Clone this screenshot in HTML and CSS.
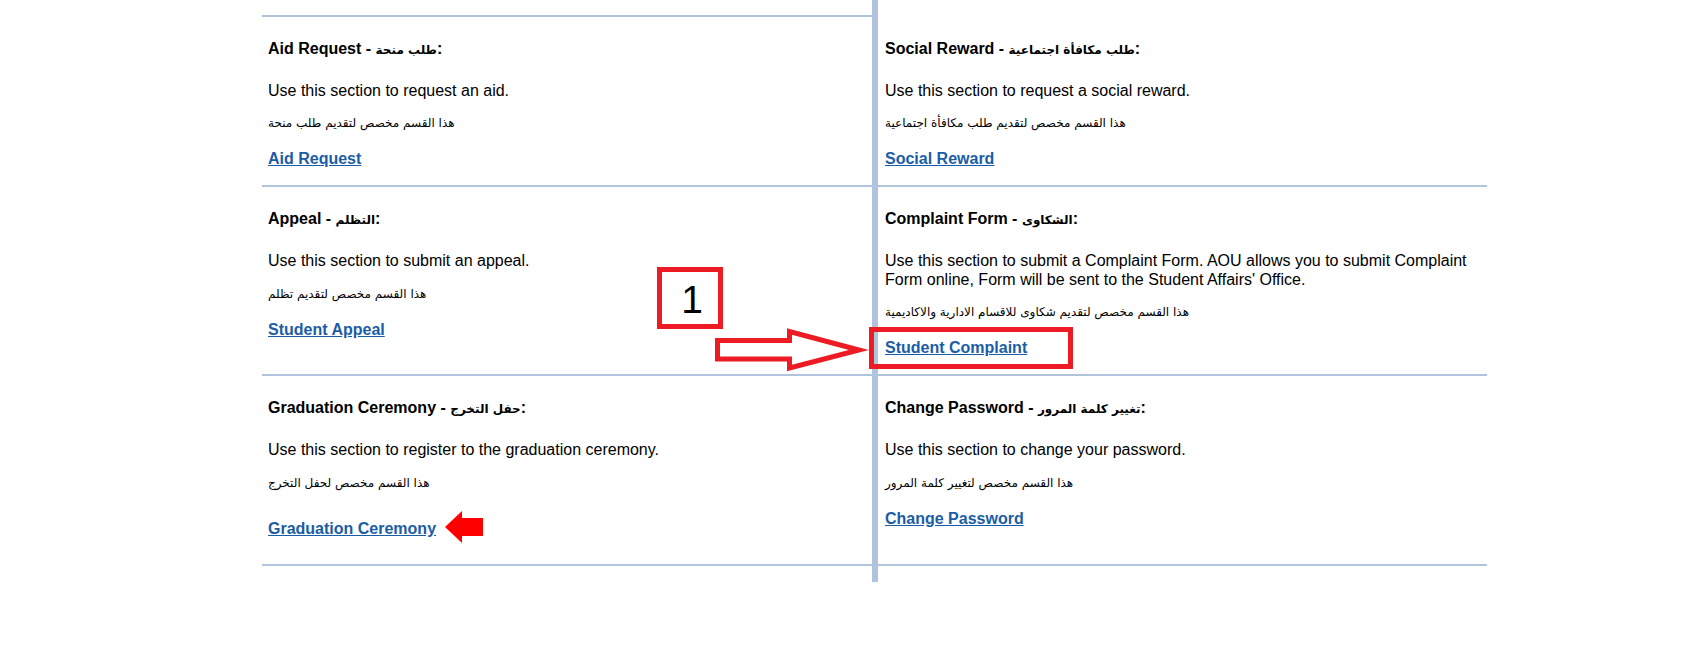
FILE: index.html
```html
<!DOCTYPE html>
<html lang="en">
<head>
<meta charset="utf-8">
<title>Student Services</title>
<link rel="stylesheet" href="styles.css">
</head>
<body>
<div class="page">
  <div class="grid">
    <div class="bar"></div>

    <div class="cell left r1 first">
      <p class="title">Aid Request - <span class="ar">طلب منحة</span>:</p>
      <p class="desc">Use this section to request an aid.</p>
      <p class="ardesc" dir="rtl">هذا القسم مخصص لتقديم طلب منحة</p>
      <p class="linkline"><a href="#">Aid Request</a></p>
    </div>
    <div class="cell right r1 first">
      <p class="title">Social Reward - <span class="ar">طلب مكافأة اجتماعية</span>:</p>
      <p class="desc">Use this section to request a social reward.</p>
      <p class="ardesc" dir="rtl">هذا القسم مخصص لتقديم طلب مكافأة اجتماعية</p>
      <p class="linkline"><a href="#">Social Reward</a></p>
    </div>

    <div class="cell left r2">
      <p class="title">Appeal - <span class="ar">التظلم</span>:</p>
      <p class="desc">Use this section to submit an appeal.</p>
      <p class="ardesc" dir="rtl">هذا القسم مخصص لتقديم تظلم</p>
      <p class="linkline"><a href="#">Student Appeal</a></p>
    </div>
    <div class="cell right r2">
      <p class="title">Complaint Form - <span class="ar">الشكاوى</span>:</p>
      <p class="desc">Use this section to submit a Complaint Form. AOU allows you to submit Complaint Form online, Form will be sent to the Student Affairs' Office.</p>
      <p class="ardesc" dir="rtl">هذا القسم مخصص لتقديم شكاوى للاقسام الادارية والاكاديمية</p>
      <p class="linkline"><a href="#">Student Complaint</a></p>
    </div>

    <div class="cell left r3 tall">
      <p class="title">Graduation Ceremony - <span class="ar">حفل التخرج</span>:</p>
      <p class="desc">Use this section to register to the graduation ceremony.</p>
      <p class="ardesc" dir="rtl">هذا القسم مخصص لحفل التخرج</p>
      <p class="linkline arrowline"><a href="#">Graduation Ceremony</a><svg class="red-arrow" width="38" height="32" viewBox="0 0 38 32"><polygon points="0,16 17,0 17,7 38,7 38,25 17,25 17,32" fill="#ff0000"/></svg></p>
    </div>
    <div class="cell right r3">
      <p class="title">Change Password - <span class="ar">تغيير كلمة المرور</span>:</p>
      <p class="desc">Use this section to change your password.</p>
      <p class="ardesc" dir="rtl">هذا القسم مخصص لتغيير كلمة المرور</p>
      <p class="linkline"><a href="#">Change Password</a></p>
    </div>
  </div>

  <div class="step-box">1</div>
  <svg class="hollow-arrow" width="160" height="56" viewBox="0 0 160 56"><polygon points="7.5,18.5 79.5,18.5 79.5,9.5 149,28 79.5,46 79.5,37 7.5,37" fill="none" stroke="#ed1c24" stroke-width="5" stroke-linejoin="miter"/></svg>
  <div class="highlight"></div>
</div>
</body>
</html>
```

FILE: styles.css
```css
html, body {
  margin: 0;
  padding: 0;
  background: #ffffff;
}

body {
  font-family: "Liberation Sans", Arial, "DejaVu Sans", sans-serif;
  color: #000000;
}

.page {
  position: relative;
  width: 1696px;
  height: 648px;
  overflow: hidden;
}

.grid {
  display: grid;
  grid-template-columns: 610px 6px 609px;
  grid-template-rows: 15px auto auto auto 16px;
  margin-left: 262px;
  width: 1225px;
}

.bar {
  grid-column: 2;
  grid-row: 1 / 6;
  background: #b0c4de;
}

.cell {
  border-bottom: 2px solid #b0c4de;
  padding: 0 6px 17px 6px;
}

.cell.left {
  grid-column: 1;
}

.cell.right {
  grid-column: 3;
  padding-left: 7px;
  padding-right: 8px;
}

.cell.r1 { grid-row: 2; }
.cell.r2 { grid-row: 3; }
.cell.r3 { grid-row: 4; }

.cell.tall {
  padding-bottom: 21px;
}

.cell.left.first {
  border-top: 2px solid #b0c4de;
}

.cell.right.first {
  padding-top: 2px;
}

.cell p {
  margin: 0;
}

.title {
  margin-top: 23px !important;
  font-size: 16px;
  font-weight: bold;
  line-height: 18px;
}

.ar {
  font-family: "DejaVu Sans", sans-serif;
  font-size: 12px;
}

.desc {
  margin-top: 23px !important;
  font-size: 16px;
  line-height: 18.4px;
}

.ardesc {
  margin-top: 14px !important;
  font-family: "DejaVu Sans", sans-serif;
  font-size: 12px;
  line-height: 18px;
  direction: rtl;
  display: inline-block;
}

.linkline {
  margin-top: 18px !important;
  font-size: 16px;
  line-height: 18px;
  font-weight: bold;
}

.linkline a {
  color: #1a5da6;
  text-decoration: underline;
}

.arrowline {
  margin-top: 25px !important;
}

.red-arrow {
  vertical-align: middle;
  margin-left: 9px;
  margin-top: -6px;
}

.step-box {
  position: absolute;
  left: 657px;
  top: 267px;
  width: 66px;
  height: 62px;
  box-sizing: border-box;
  border: 5px solid #ed1c24;
  display: flex;
  align-items: center;
  justify-content: center;
  font-family: "Liberation Sans", Arial, sans-serif;
  font-size: 39px;
  line-height: 1;
  color: #000;
  padding-left: 4px;
  padding-top: 2px;
}

.hollow-arrow {
  position: absolute;
  left: 710px;
  top: 322px;
}

.highlight {
  position: absolute;
  left: 869px;
  top: 327px;
  width: 204px;
  height: 42px;
  box-sizing: border-box;
  border: 5px solid #ed1c24;
}
```
